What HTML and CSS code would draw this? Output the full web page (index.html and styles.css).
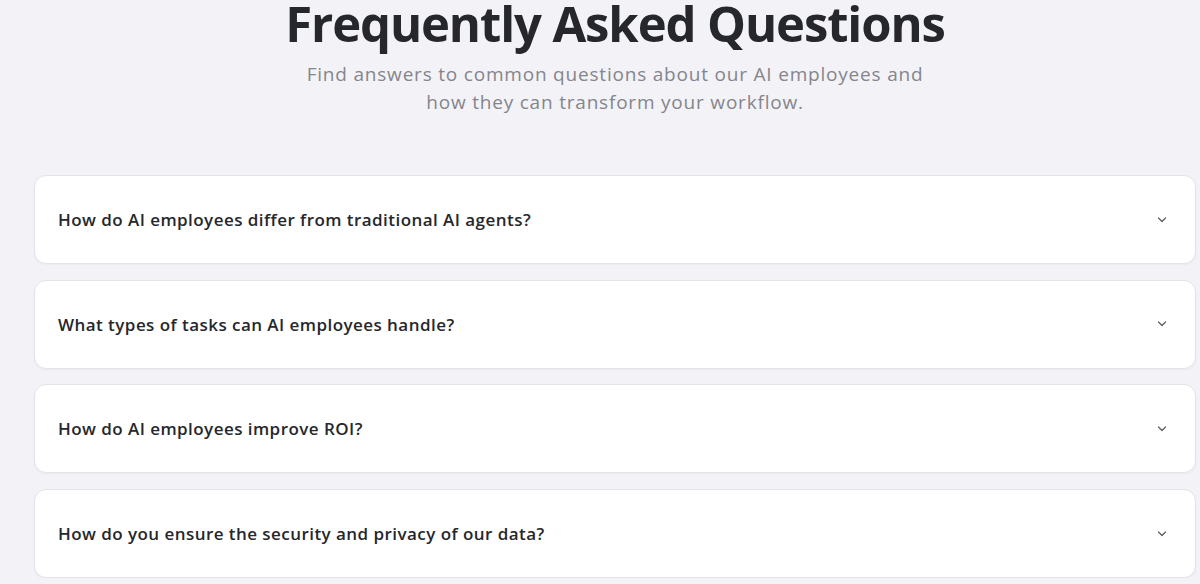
FILE: index.html
```html
<!DOCTYPE html>
<html>
<head>
    <title>FAQ</title>
    <link rel="stylesheet" href="styles.css">
</head>
<body>
    <section class="faq">
        <div class="faq-head">
            <h1>Frequently Asked Questions</h1>
            <p class="lead">Find answers to common questions about our AI employees and<br>how they can transform your workflow.</p>
        </div>

        <div class="faq-list">
            <div class="faq-item">
                <span class="question">How do AI employees differ from traditional AI agents?</span>
                <svg class="chevron" width="10" height="6" viewBox="0 0 10 6"><path d="M1.5 1l3.5 3.5 3.5-3.5" fill="none" stroke="#5a5b61" stroke-width="1.2" stroke-linecap="round" stroke-linejoin="round"/></svg>
            </div>
            <div class="faq-item">
                <span class="question">What types of tasks can AI employees handle?</span>
                <svg class="chevron" width="10" height="6" viewBox="0 0 10 6"><path d="M1.5 1l3.5 3.5 3.5-3.5" fill="none" stroke="#5a5b61" stroke-width="1.2" stroke-linecap="round" stroke-linejoin="round"/></svg>
            </div>
            <div class="faq-item">
                <span class="question">How do AI employees improve ROI?</span>
                <svg class="chevron" width="10" height="6" viewBox="0 0 10 6"><path d="M1.5 1l3.5 3.5 3.5-3.5" fill="none" stroke="#5a5b61" stroke-width="1.2" stroke-linecap="round" stroke-linejoin="round"/></svg>
            </div>
            <div class="faq-item">
                <span class="question">How do you ensure the security and privacy of our data?</span>
                <svg class="chevron" width="10" height="6" viewBox="0 0 10 6"><path d="M1.5 1l3.5 3.5 3.5-3.5" fill="none" stroke="#5a5b61" stroke-width="1.2" stroke-linecap="round" stroke-linejoin="round"/></svg>
            </div>
        </div>
    </section>
</body>
</html>
```

FILE: styles.css
```css
body {
    margin: 0;
    padding: 0;
    background: #f3f3f7;
    font-family: 'Open Sans', sans-serif;
    color: #26272c;
}
.faq {
    width: 1162px;
    margin-left: 34px;
}
.faq-head {
    text-align: center;
}
h1 {
    margin: -5px 0 0;
    font-size: 49px;
    line-height: 56px;
    font-weight: 700;
    color: #26272c;
    letter-spacing: -1.1px;
}
.lead {
    margin: 9px 0 0;
    font-size: 19px;
    line-height: 28px;
    color: #85858c;
    font-weight: 400;
    letter-spacing: 0.8px;
}
.faq-list {
    margin-top: 59px;
    display: flex;
    flex-direction: column;
    gap: 15.7px;
}
.faq-item {
    height: 87px;
    display: flex;
    align-items: center;
    justify-content: space-between;
    padding: 0 28px 0 23px;
    background: #fff;
    border: 1px solid #e3e3e9;
    border-radius: 12px;
    box-shadow: 0 1px 2px rgba(0,0,0,0.04);
}
.question {
    font-size: 17px;
    font-weight: 600;
    letter-spacing: 0.45px;
    color: #26272c;
}
.chevron {
    display: block;
}
```
